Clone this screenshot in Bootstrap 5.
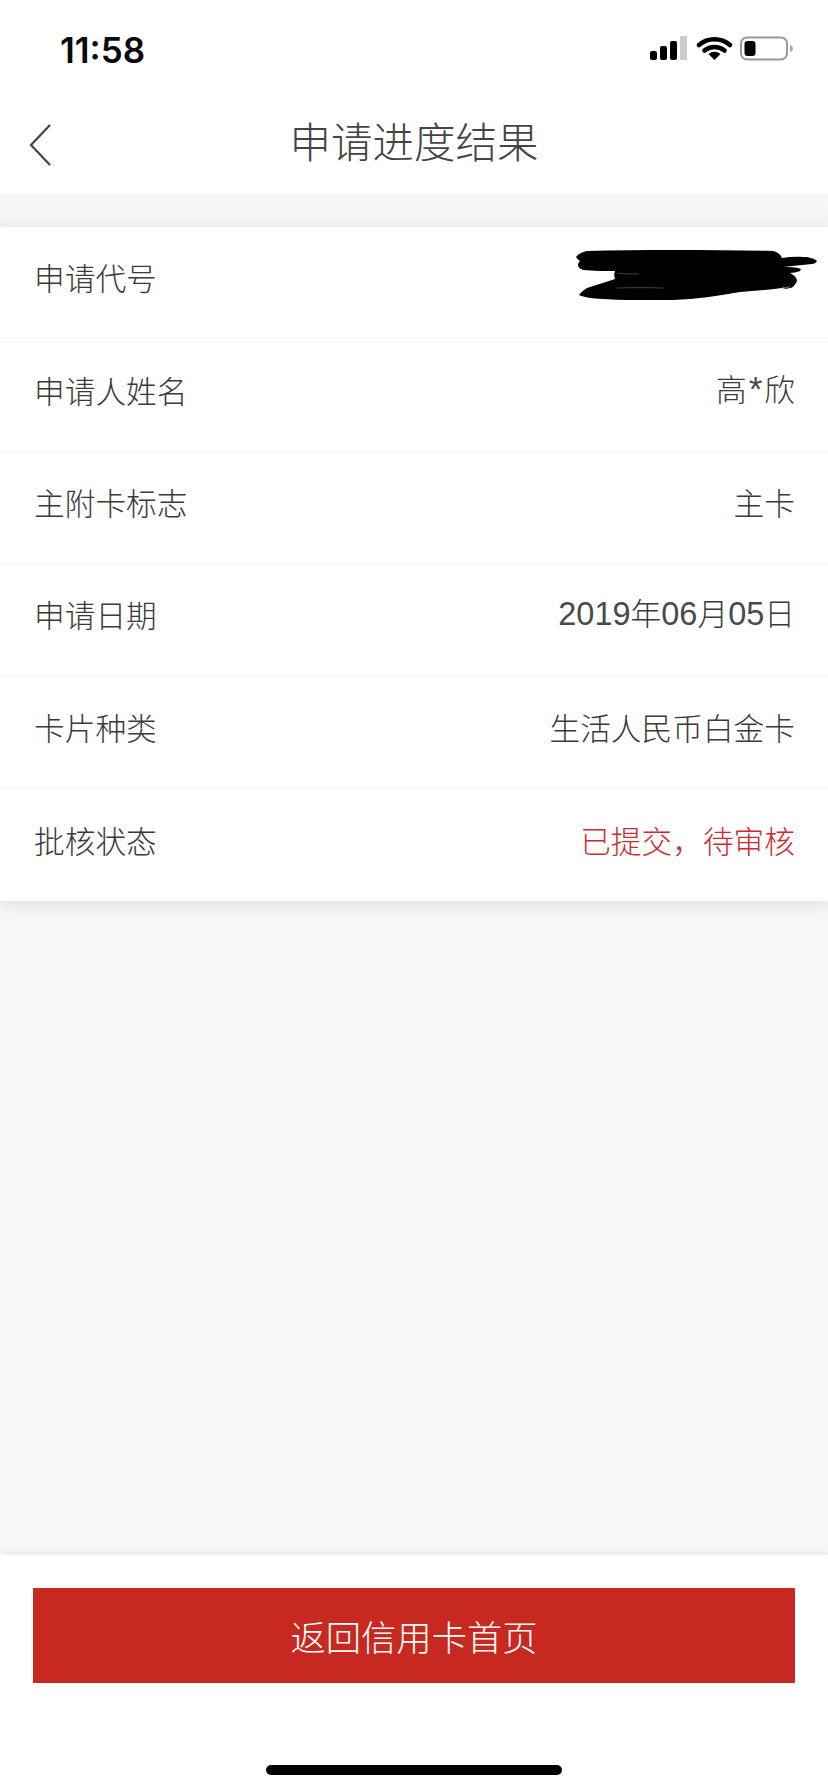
<!DOCTYPE html>
<html lang="zh">
<head>
<meta charset="utf-8">
<title>申请进度结果</title>
<link href="https://cdn.jsdelivr.net/npm/bootstrap@5.3.0/dist/css/bootstrap.min.css" rel="stylesheet">
<style>
html,body{margin:0;background:#f7f7f7}
body{font-family:"Noto Sans CJK SC","Liberation Sans",sans-serif;color:#3c3c3c}
.phone-page{width:828px;height:1792px;overflow:hidden}
.status-strip{height:97px;background:#fff;padding:0 33px 0 60px}
.clock-text{font-family:"Inter","Liberation Sans",sans-serif;font-weight:600;font-size:35px;letter-spacing:0;color:#0a0a0a;line-height:1;margin-top:4px}
.title-strip{height:97px;background:#fff;padding-bottom:10px}
.back-hit{position:absolute;left:29px;top:26px;line-height:0}
.title-text{font-size:41.500px;font-weight:300;color:#444;line-height:1.2}
.gap-band{height:33px;background:linear-gradient(#f3f3f3,#f7f7f7 30%,#f3f3f3)}
.info-panel{background:#fff;box-shadow:0 4px 14px rgba(0,0,0,.1);position:relative}
.info-line{height:112.4px;padding:0 33px 11px 34px;font-size:30.700px;font-weight:300;border-bottom:1px solid #f4f4f4;color:#3a3a3a}
.info-line:last-child{border-bottom:0}
.scribble{margin-right:-22px;margin-top:-5px}
.num-text{font-family:"Liberation Sans",sans-serif;font-size:32.500px;color:#4a4a4a}
.star-text{margin:0 2px;font-size:35px}
.state-text{color:#cf2a2e}
.foot-panel{background:#fff;height:237px;padding:33px 33px 0;box-shadow:0 -3px 8px rgba(0,0,0,.05)}
.home-btn{width:100%;height:95px;border-radius:0;border:0;background:#c72820;color:#fff;font-size:35.300px;font-weight:300;line-height:1}
.home-btn:hover{background:#c72820;color:#fff}
.home-pill{width:296px;height:10px;border-radius:5px;background:#000;margin-top:82px}
</style>
</head>
<body>
<div class="phone-page d-flex flex-column">
  <div class="status-strip d-flex justify-content-between align-items-center">
    <div class="clock-text">11:58</div>
    <svg width="145" height="28" viewBox="0 0 145 28" aria-hidden="true">
      <rect x="0" y="16" width="7" height="9" rx="2" fill="#000"/>
      <rect x="10" y="11" width="7" height="14" rx="2" fill="#000"/>
      <rect x="20" y="6" width="7" height="19" rx="2" fill="#000"/>
      <rect x="30" y="1" width="7" height="24" rx="1" fill="#ccc"/>
      <path d="M49 10a24 24 0 0 1 31 0" fill="none" stroke="#000" stroke-width="4.6" stroke-linecap="round"/>
      <path d="M54.500 15.500a16 16 0 0 1 20 0" fill="none" stroke="#000" stroke-width="4.6" stroke-linecap="round"/>
      <path d="M64.500 25l-6-6a9 9 0 0 1 12 0z" fill="#000"/>
      <rect x="91" y="2.500" width="46" height="22" rx="6" fill="none" stroke="#999" stroke-width="2"/>
      <rect x="94.500" y="6" width="11" height="15" rx="3" fill="#000"/>
      <path d="M140 10c2 .5 3 2 3 3.500s-1 3-3 3.500z" fill="#aaa"/>
    </svg>
  </div>
  <div class="title-strip position-relative d-flex justify-content-center align-items-center">
    <div class="back-hit">
      <svg width="24" height="44" viewBox="0 0 24 44" aria-hidden="true"><path d="M21 2 2 22l19 20" fill="none" stroke="#444" stroke-width="2.200"/></svg>
    </div>
    <div class="title-text">申请进度结果</div>
  </div>
  <div class="gap-band"></div>
  <div class="info-panel">
    <div class="info-line d-flex justify-content-between align-items-center">
      <span>申请代号</span>
      <svg class="scribble" width="241" height="50" viewBox="0 0 241 50" aria-hidden="true">
        <path d="M0 7C3 3 7 2 11 1 70-.5 140 0 197 1c5 1 8 4 9 7 7-1 14-1.500 21-1 7 0 12 2 14 4-1 2-3 3-5 3-10 1-20 2-29 3 6 0 13 0 18 2l-1 2c-3 1-7 2-10 2 4 2 7 5 7 8-2 4-4 7-7 7-3 1-5 1-8 0-14 2-28 3-42 4-22 4-44 7-67 8-28 1-58 0-83-2-5-1-9-2-11-3 2-3 5-5 8-7 9-3 19-6 28-9-1-3-1-5 0-8-10 0-22 0-32-1-3-1-5-3-5-5 0-2 1-3 2-4-2-1-3-3-4-4z" fill="#000"/>
        <path d="M206 37c3 1 6 1 8-1" fill="none" stroke="#777" stroke-width="1"/>
        <path d="M41 23c8 1 14 1 22 1M41 38c14-.5 30-.5 46 0" fill="none" stroke="#555" stroke-width=".8"/>
      </svg>
    </div>
    <div class="info-line d-flex justify-content-between align-items-center"><span>申请人姓名</span><span>高<span class="num-text star-text">*</span>欣</span></div>
    <div class="info-line d-flex justify-content-between align-items-center"><span>主附卡标志</span><span>主卡</span></div>
    <div class="info-line d-flex justify-content-between align-items-center"><span>申请日期</span><span><span class="num-text">2019</span>年<span class="num-text">06</span>月<span class="num-text">05</span>日</span></div>
    <div class="info-line d-flex justify-content-between align-items-center"><span>卡片种类</span><span>生活人民币白金卡</span></div>
    <div class="info-line d-flex justify-content-between align-items-center"><span>批核状态</span><span class="state-text">已提交，待审核</span></div>
  </div>
  <div class="flex-grow-1"></div>
  <div class="foot-panel d-flex flex-column align-items-center">
    <button type="button" class="btn home-btn">返回信用卡首页</button>
    <div class="home-pill"></div>
  </div>
</div>
<script src="https://cdn.jsdelivr.net/npm/bootstrap@5.3.0/dist/js/bootstrap.bundle.min.js"></script>
</body>
</html>
